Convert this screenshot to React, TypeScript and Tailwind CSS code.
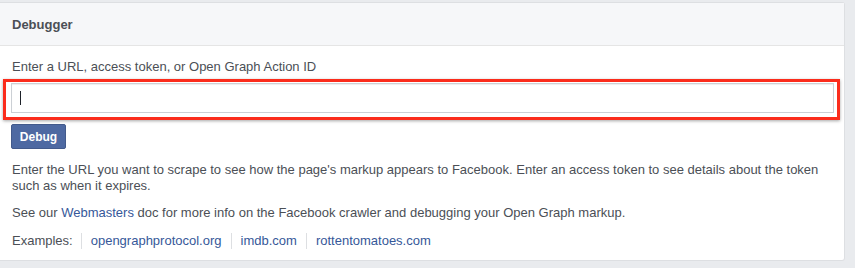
export default function App() {
  return (
    <div className="h-[268px] w-[855px] overflow-hidden bg-[#e9ebee] pt-[2px] font-['Liberation_Sans',Helvetica,Arial,sans-serif] text-[13px] text-[#4b4f56]">
      <div className="mr-[10px] h-[259px] rounded-r-[3px] border border-l-0 border-[#dddfe2] bg-white">
        <div className="flex h-[43px] items-center border-b border-[#e5e5e5] bg-[#f6f7f9] pl-[12px] pt-[1px] font-bold">
          Debugger
        </div>
        <div className="px-[12px] pt-[13px] leading-[16px]">
          <div>Enter a URL, access token, or Open Graph Action ID</div>
          <div className="ml-[-9px] mt-[4px] w-[837px] border-[3px] border-[#fb2c1c] pb-[4px] pl-[5px] pt-[1px] shadow-[0_1px_3px_rgba(0,0,0,0.35)]">
            <div className="flex h-[30px] w-[823px] items-center border border-[#ccd0d5] pl-[8px] shadow-[inset_0_1px_1px_rgba(0,0,0,0.07)]">
              <span className="h-[14px] w-px bg-[#1d2129]" />
            </div>
          </div>
          <button
            type="button"
            className="ml-[-1px] mt-[4px] h-[25px] w-[55px] rounded-[2px] border border-[#435a8b] bg-[#4e69a2] text-[12px] font-bold text-white"
          >
            Debug
          </button>
          <p className="mt-[13px]">
            Enter the URL you want to scrape to see how the page's markup appears to Facebook. Enter an access token to see details about the token such as when it expires.
          </p>
          <p className="mt-[11px]">
            See our <a className="text-[#365899]">Webmasters</a> doc for more info on the Facebook crawler and debugging your Open Graph markup.
          </p>
          <div className="mt-[12px] flex items-center">
            <span className="pr-[8px]">Examples:</span>
            <span className="h-[16px] w-px bg-[#dddfe2]" />
            <a className="px-[9px] text-[#365899]">opengraphprotocol.org</a>
            <span className="h-[16px] w-px bg-[#dddfe2]" />
            <a className="px-[9px] text-[#365899]">imdb.com</a>
            <span className="h-[16px] w-px bg-[#dddfe2]" />
            <a className="px-[9px] text-[#365899]">rottentomatoes.com</a>
          </div>
        </div>
      </div>
    </div>
  );
}
